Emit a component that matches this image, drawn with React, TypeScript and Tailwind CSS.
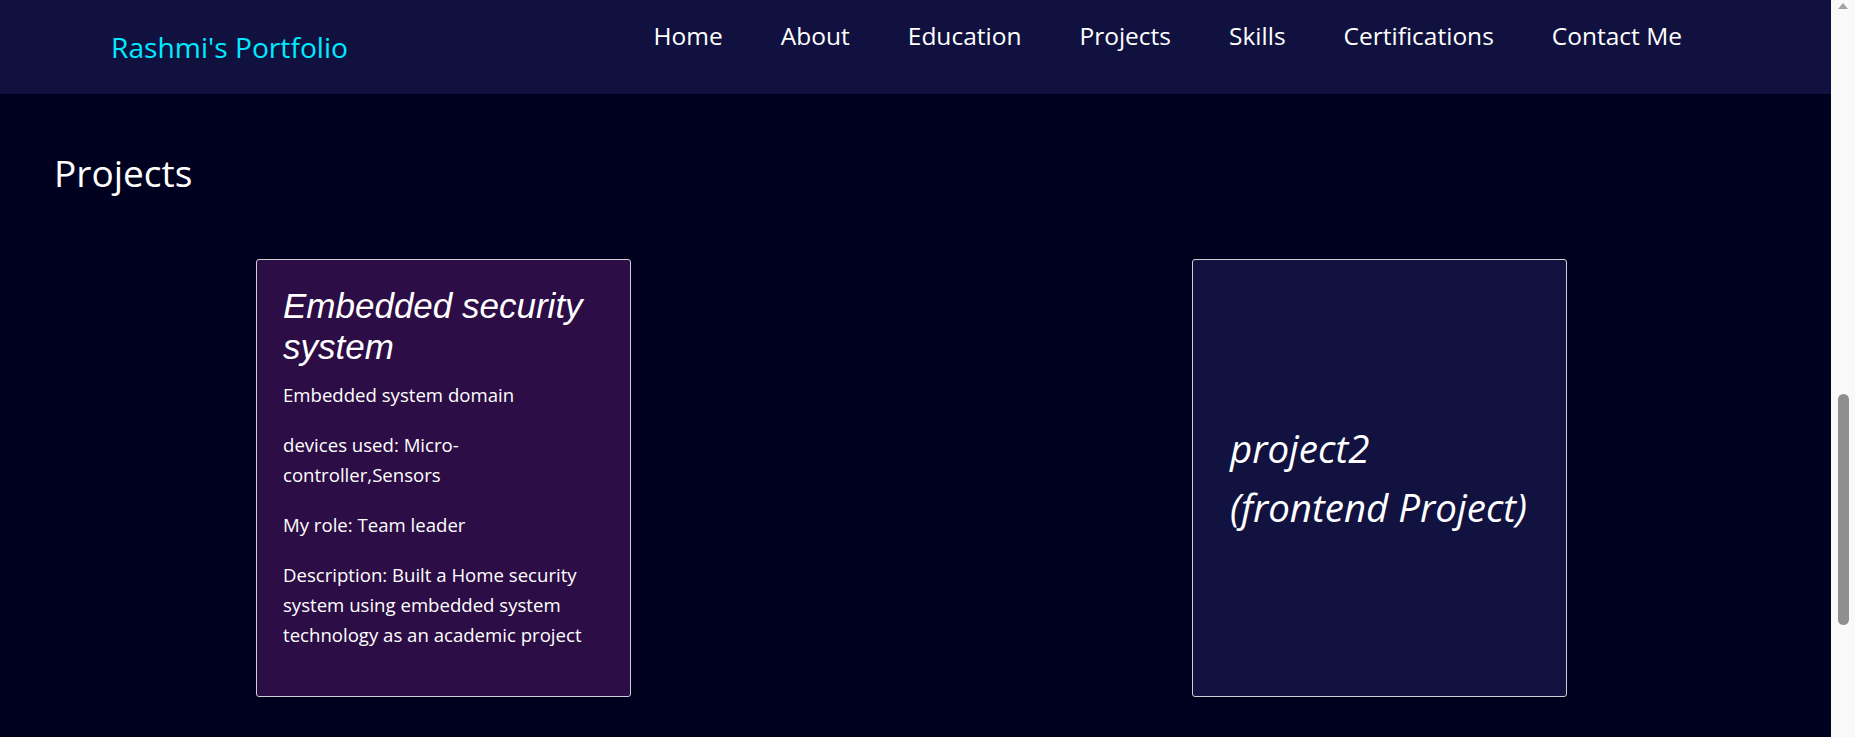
import React from "react";

const navLinks = ["Home", "About", "Education", "Projects", "Skills", "Certifications", "Contact Me"];

const sans = "font-['Open_Sans','Noto_Sans',sans-serif]";

const Header = () => (
  <header className="h-[94px] bg-[#111140] flex items-start justify-between pl-[111px] pr-[149px] shrink-0">
    <div className={`${sans} text-[28.2px] text-[#00eaff] pt-[27px] leading-[40px]`}>Rashmi's Portfolio</div>
    <nav className={`${sans} flex gap-[58px] text-[24.5px] text-white pt-[16px] leading-[40px]`}>
      {navLinks.map((link) => (
        <a key={link} href="#" className="whitespace-nowrap">
          {link}
        </a>
      ))}
    </nav>
  </header>
);

const ProjectOne = () => (
  <div className="w-[375px] h-[438px] bg-[#2c0d45] border border-[#d0d0d0] rounded-[3px] px-[26px] pt-[25px]">
    {/* Title */}
    <h2 className="font-['Liberation_Sans',Arial,sans-serif] italic text-[35px] leading-[41px] text-white mb-[13px]">
      Embedded security system
    </h2>
    <div className={`${sans} text-[18.6px] leading-[30px] text-white flex flex-col gap-[20px]`}>
      <p>Embedded system domain</p>
      <p>devices used: Micro-controller,Sensors</p>
      <p>My role: Team leader</p>
      <p>Description: Built a Home security system using embedded system technology as an academic project</p>
    </div>
  </div>
);

const ProjectTwo = () => (
  <div className="w-[375px] h-[438px] bg-[#121240] border border-[#d0d0d0] rounded-[3px] px-[37px] flex items-center">
    <p className={`${sans} italic text-[38.5px] leading-[59px] text-white whitespace-nowrap`}>
      project2
      <br />
      (frontend Project)
    </p>
  </div>
);

const Scrollbar = () => (
  <div className="w-[24px] shrink-0 bg-[#f9f9f9] flex flex-col items-center">
    <div className="mt-[3px] w-0 h-0 border-l-[5px] border-r-[5px] border-b-[6px] border-l-transparent border-r-transparent border-b-[#a3a3a3]" />
    <div className="mt-[385px] w-[11px] h-[231px] rounded-full bg-[#8f8f8f]" />
  </div>
);

export default function App() {
  return (
    <div className="h-screen w-full flex overflow-hidden bg-[#00001f]">
      <div className="flex-1 flex flex-col">
        <Header />
        <main className="flex-1">
          <h1 className={`${sans} text-[37px] text-white pl-[54px] pt-[49px] leading-[60px]`}>Projects</h1>
          <div className="flex justify-between pl-[256px] pr-[264px] mt-[56px]">
            <ProjectOne />
            <ProjectTwo />
          </div>
        </main>
      </div>
      <Scrollbar />
    </div>
  );
}
